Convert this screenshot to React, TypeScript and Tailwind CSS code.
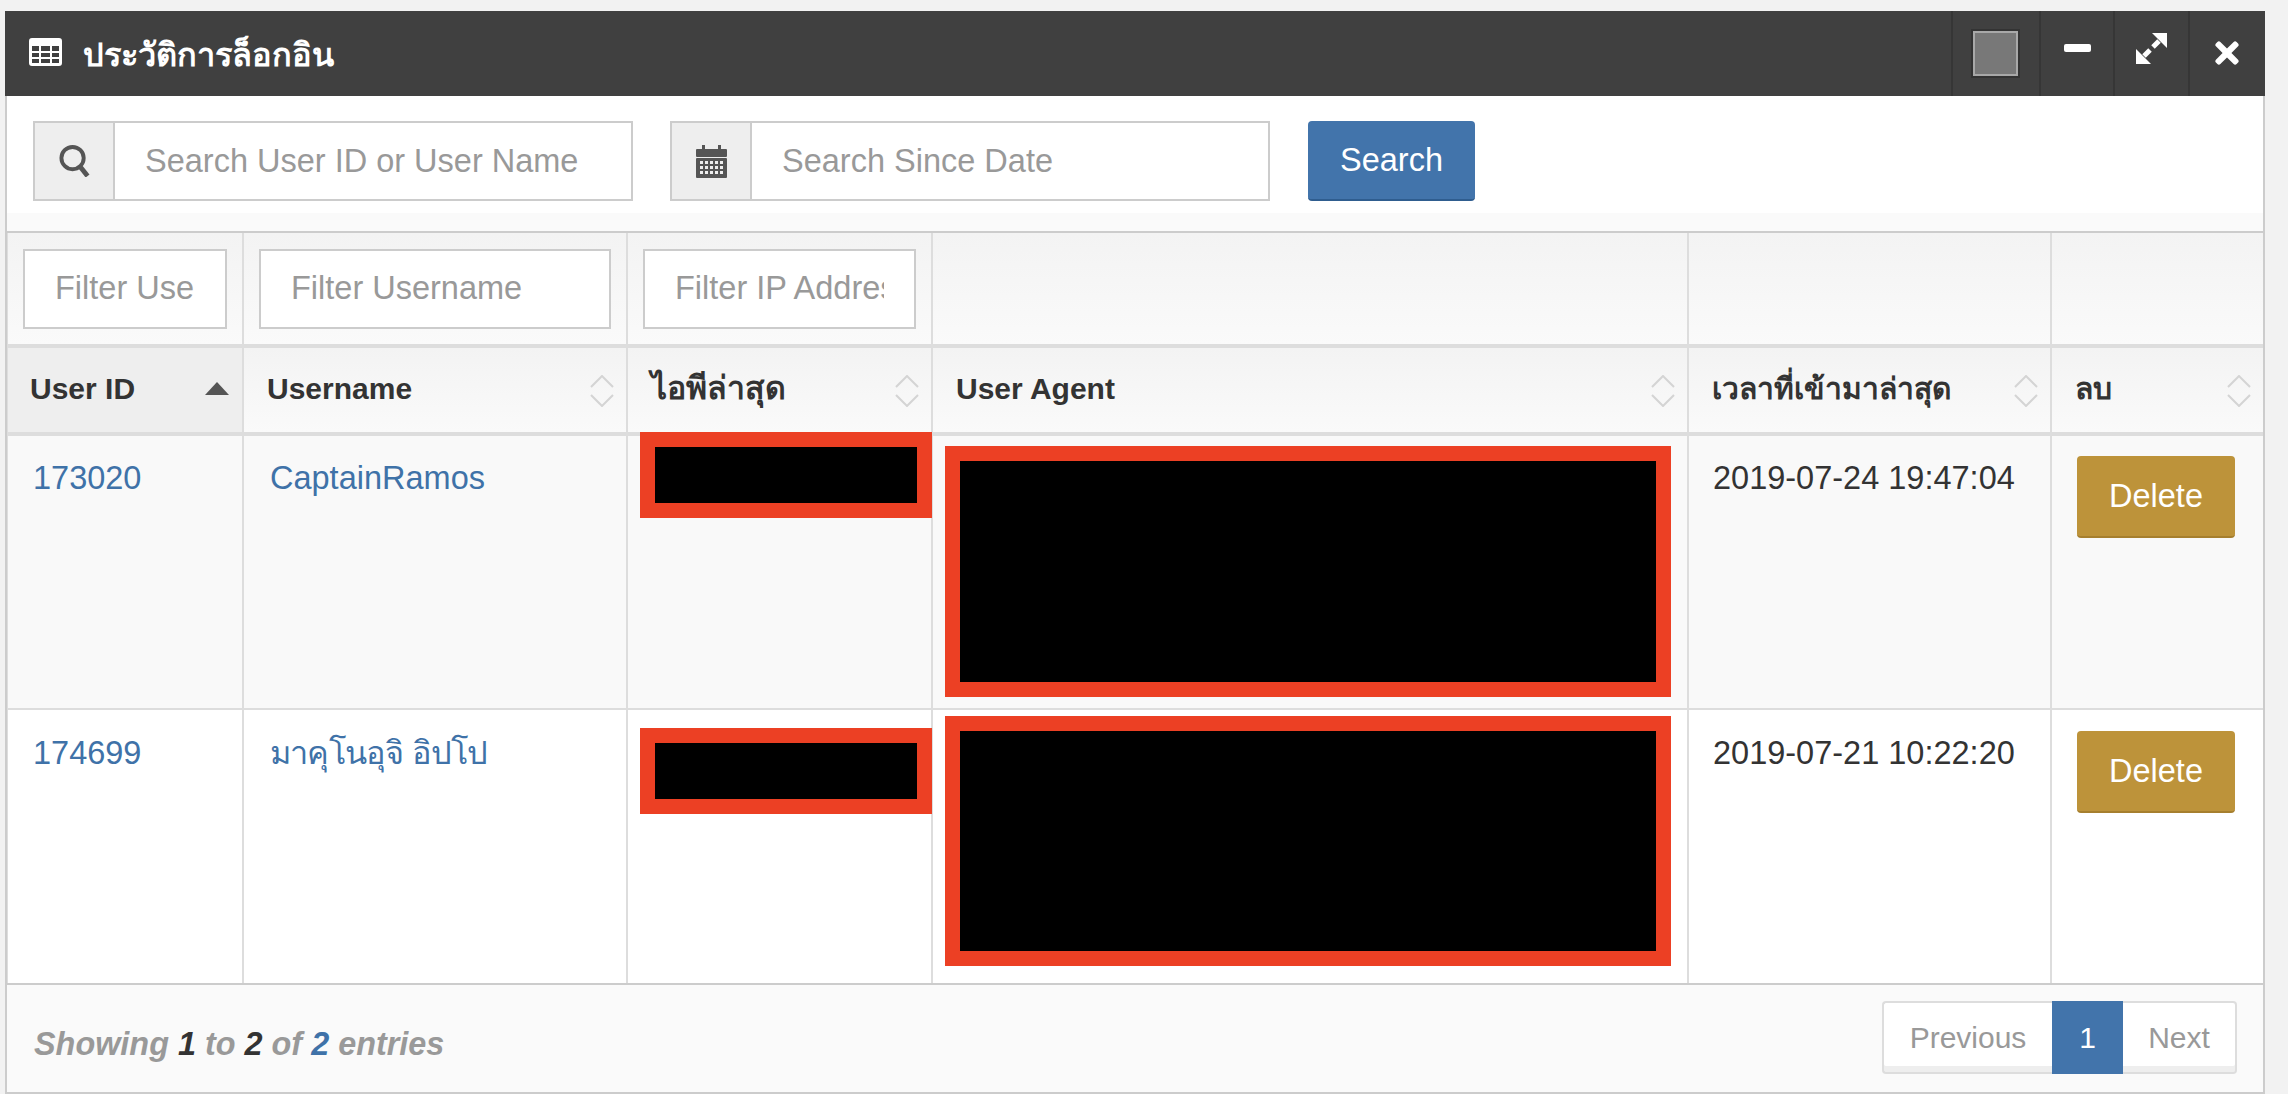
import React from 'react';
import { FaTimes } from 'react-icons/fa';

// retina capture of a bootstrap admin widget, hence the large font sizes
const SortIcon: React.FC = () => (
  <svg viewBox="0 0 24 32" className="absolute right-[12px] top-[27px] h-[32px] w-[24px]" fill="none" stroke="#d4d4d4" strokeWidth="2">
    <path d="M1 12 L12 1 L23 12" />
    <path d="M1 20 L12 31 L23 20" />
  </svg>
);

const SortAsc: React.FC = () => (
  <svg viewBox="0 0 24 13" className="absolute right-[13px] top-[34px] h-[13px] w-[24px]" fill="#555555">
    <path d="M12 0 L24 13 L0 13 Z" />
  </svg>
);

const TableIcon: React.FC = () => (
  <svg viewBox="0 0 33 28" className="h-[28px] w-[33px]" fill="#ffffff" fillRule="evenodd">
    <path d="M3 0 H30 A3 3 0 0 1 33 3 V25 A3 3 0 0 1 30 28 H3 A3 3 0 0 1 0 25 V3 A3 3 0 0 1 3 0 Z M3 8 V13 H10 V8 Z M12 8 V13 H21 V8 Z M23 8 V13 H30 V8 Z M3 15 V19 H10 V15 Z M12 15 V19 H21 V15 Z M23 15 V19 H30 V15 Z M3 21 V25 H10 V21 Z M12 21 V25 H21 V21 Z M23 21 V25 H30 V21 Z" />
  </svg>
);

const SearchIcon: React.FC = () => (
  <svg viewBox="0 0 33 33" className="h-[32px] w-[33px]" fill="none" stroke="#555555">
    <circle cx="14.5" cy="13.5" r="11.5" strokeWidth="4" />
    <path d="M22 22 L30 32" strokeWidth="5" />
  </svg>
);

const CalendarIcon: React.FC = () => (
  <svg viewBox="0 0 31 33" className="h-[33px] w-[31px]" fill="#555555">
    <rect x="6" y="0" width="3" height="6" />
    <rect x="22" y="0" width="3" height="6" />
    <rect x="0" y="4" width="31" height="8" rx="1" />
    <rect x="0" y="13" width="31" height="20" rx="1" />
    <g fill="#eeeeee">
      {[16, 21, 26].map((y) => [4, 9, 14, 19, 24].map((x) => <rect key={`${x}-${y}`} x={x} y={y} width="3" height="3" />))}
    </g>
  </svg>
);

const ExpandIcon: React.FC = () => (
  <svg viewBox="0 0 31 31" className="h-[31px] w-[31px]" fill="#ffffff" stroke="#ffffff">
    <path d="M16 0 H31 V15 Z" strokeWidth="0" />
    <path d="M23 8 L17 14" strokeWidth="5" fill="none" />
    <path d="M0 16 L15 31 H0 Z" strokeWidth="0" />
    <path d="M8 23 L14 17" strokeWidth="5" fill="none" />
  </svg>
);

const HeadCell: React.FC<{ label: React.ReactNode; active?: boolean; last?: boolean; first?: boolean }> = ({ label, active, last, first }) => (
  <th
    className={`relative h-[88px] border-b-[4px] border-b-[#dddddd] pb-[4px] text-left align-middle text-[30px] font-bold text-[#333333] ${first ? 'pl-[22px]' : 'pl-[23px]'} ${last ? '' : 'border-r-2 border-r-[#dddddd]'} ${active ? 'bg-[#eeeeee]' : 'bg-gradient-to-b from-[#f3f3f3] to-[#fafafa]'}`}
  >
    {label}
    {active ? <SortAsc /> : <SortIcon />}
  </th>
);

const FilterCell: React.FC<{ placeholder?: string; width?: string; last?: boolean }> = ({ placeholder, width, last }) => (
  <th className={`h-[115px] border-b-[4px] border-b-[#dddddd] bg-gradient-to-b from-[#f3f3f3] to-[#fafafa] pl-[15px] text-left align-middle ${last ? '' : 'border-r-2 border-r-[#dddddd]'}`}>
    {placeholder && (
      <input
        placeholder={placeholder}
        readOnly
        className={`block h-[80px] border-2 border-[#cccccc] bg-white px-[30px] text-[32.5px] font-normal outline-none placeholder:text-[#999999] ${width}`}
      />
    )}
  </th>
);

const Redacted: React.FC<{ className: string }> = ({ className }) => (
  <div className={`absolute border-[15px] border-[#ec4024] bg-black ${className}`} />
);

const DeleteButton: React.FC = () => (
  <button className="block h-[82px] w-[158px] rounded-[4px] border-b-2 border-b-[#a67f2e] bg-[#bd933a] text-[32.5px] text-white">Delete</button>
);

const Row: React.FC<{ id: string; name: React.ReactNode; time: string; bg: string; height: string; ip: string; agent: string; border: string; pad: string }> = ({
  id, name, time, bg, height, ip, agent, border, pad,
}) => (
  <tr className={bg}>
    <td className={`${height} ${border} border-r-2 border-r-[#dddddd] ${pad} pl-[25px] align-top text-[32.5px] leading-[44px] text-[#3f72a8]`}>{id}</td>
    <td className={`${border} border-r-2 border-r-[#dddddd] ${pad} pl-[26px] align-top text-[32.5px] leading-[44px] text-[#3f72a8]`}>{name}</td>
    <td className={`relative ${border} border-r-2 border-r-[#dddddd]`}>
      <Redacted className={ip} />
    </td>
    <td className={`relative ${border} border-r-2 border-r-[#dddddd]`}>
      <Redacted className={agent} />
    </td>
    <td className={`${border} border-r-2 border-r-[#dddddd] ${pad} pl-[24px] align-top text-[32.5px] leading-[44px] text-[#333333]`}>{time}</td>
    <td className={`${border} ${pad} pl-[25px] align-top`}>
      <DeleteButton />
    </td>
  </tr>
);

export default function App() {
  return (
    <div className="h-[1094px] w-full overflow-hidden bg-[#f2f2f2] pl-[5px] pt-[11px] font-['Liberation_Sans','Noto_Sans',sans-serif]">
      <div className="flex h-[1083px] w-[2260px] flex-col border-b-2 border-b-[#cccccc]">
        <div className="flex h-[85px] shrink-0 items-center justify-between bg-[#404040] text-white">
          <div className="flex items-center pl-[24px]">
            <div className="mb-[4px]">
              <TableIcon />
            </div>
            <span className="ml-[21px] mt-[3px] text-[32.5px] font-bold">ประวัติการล็อกอิน</span>
          </div>
          <div className="flex h-full">
            <div className="flex w-[88px] items-center justify-center border-l-2 border-l-[#363636] pr-[1px]">
              <div className="h-[49px] w-[49px] border-2 border-[#333333] bg-[#787878] outline outline-2 -outline-offset-4 outline-[#a8a8a8]" />
            </div>
            <div className="flex w-[74px] items-center justify-center border-l-2 border-l-[#363636] pb-[11px]">
              <div className="h-[8px] w-[27px] rounded-[2px] bg-white" />
            </div>
            <div className="flex w-[75px] items-center justify-center border-l-2 border-l-[#363636] pb-[11px]">
              <ExpandIcon />
            </div>
            <div className="flex w-[77px] items-center justify-center border-l-2 border-l-[#363636] pb-[2px] pr-[2px]">
              <FaTimes className="h-[34px] w-[30px]" />
            </div>
          </div>
        </div>

        <div className="flex min-h-0 flex-1 flex-col border-x-2 border-x-[#cccccc]">
          <div className="flex h-[117px] shrink-0 items-start bg-white pl-[26px] pt-[25px]">
            <div className="flex h-[80px] w-[600px] border-2 border-[#cccccc]">
              <div className="flex w-[80px] items-center justify-center border-r-2 border-r-[#cccccc] bg-[#eeeeee]">
                <SearchIcon />
              </div>
              <input readOnly placeholder="Search User ID or User Name" className="min-w-0 flex-1 px-[30px] text-[32.5px] outline-none placeholder:text-[#999999]" />
            </div>
            <div className="ml-[37px] flex h-[80px] w-[600px] border-2 border-[#cccccc]">
              <div className="flex w-[80px] items-center justify-center border-r-2 border-r-[#cccccc] bg-[#eeeeee]">
                <CalendarIcon />
              </div>
              <input readOnly placeholder="Search Since Date" className="min-w-0 flex-1 px-[30px] text-[32.5px] outline-none placeholder:text-[#999999]" />
            </div>
            <button className="ml-[38px] h-[80px] w-[167px] rounded-[4px] border-b-2 border-b-[#2f5d8f] bg-[#4274ab] text-[32.5px] text-white">Search</button>
          </div>

          <div className="h-[20px] shrink-0 border-b-2 border-b-[#cccccc] bg-[#fafafa]" />

          <table className="w-[2255px] shrink-0 table-fixed border-separate border-spacing-0 border-l border-l-[#dddddd]">
            <colgroup>
              <col className="w-[236px]" />
              <col className="w-[384px]" />
              <col className="w-[305px]" />
              <col className="w-[756px]" />
              <col className="w-[363px]" />
              <col className="w-[211px]" />
            </colgroup>
            <thead>
              <tr>
                <FilterCell placeholder="Filter User ID" width="w-[204px]" />
                <FilterCell placeholder="Filter Username" width="w-[352px]" />
                <FilterCell placeholder="Filter IP Address" width="w-[273px]" />
                <FilterCell />
                <FilterCell />
                <FilterCell last />
              </tr>
              <tr>
                <HeadCell label="User ID" active first />
                <HeadCell label="Username" />
                <HeadCell label={<span className="text-[32px]">ไอพีล่าสุด</span>} />
                <HeadCell label="User Agent" />
                <HeadCell label="เวลาที่เข้ามาล่าสุด" />
                <HeadCell label="ลบ" last />
              </tr>
            </thead>
            <tbody>
              <Row
                id="173020"
                name="CaptainRamos"
                time="2019-07-24 19:47:04"
                bg="bg-[#f9f9f9]"
                height="h-[274px]"
                border="border-b-2 border-b-[#dddddd]"
                pad="pt-[20px]"
                ip="left-[12px] top-[-4px] h-[86px] w-[292px]"
                agent="left-[12px] top-[10px] h-[251px] w-[726px]"
              />
              <Row
                id="174699"
                name={<span className="tracking-[-0.8px]">มาคุโนอุจิ อิปโป</span>}
                time="2019-07-21 10:22:20"
                bg="bg-white"
                height="h-[273px]"
                border=""
                pad="pt-[21px]"
                ip="left-[12px] top-[18px] h-[86px] w-[292px]"
                agent="left-[12px] top-[6px] h-[250px] w-[726px]"
              />
            </tbody>
          </table>

          <div className="flex min-h-0 flex-1 items-start justify-between border-t-2 border-t-[#cccccc] bg-[#fafafa] pl-[27px] pr-[26px] pt-[16px]">
            <div className="pt-[23px] text-[32.4px] font-bold italic leading-[40px] text-[#999999]">
              Showing <span className="text-[#333333]">1</span> to <span className="text-[#333333]">2</span> of <span className="text-[#3f72a8]">2</span> entries
            </div>
            <div className="flex h-[73px] text-[30px]">
              <div className="flex w-[170px] items-center justify-center rounded-l-[4px] border-2 border-r-0 border-[#dddddd] bg-white text-[#999999] shadow-[inset_0_-6px_0_#eeeeee]">Previous</div>
              <div className="flex w-[71px] items-center justify-center bg-[#4274ab] text-white">1</div>
              <div className="flex w-[114px] items-center justify-center rounded-r-[4px] border-2 border-l-0 border-[#dddddd] bg-white text-[#999999] shadow-[inset_0_-6px_0_#eeeeee]">Next</div>
            </div>
          </div>
        </div>
      </div>
    </div>
  );
}
